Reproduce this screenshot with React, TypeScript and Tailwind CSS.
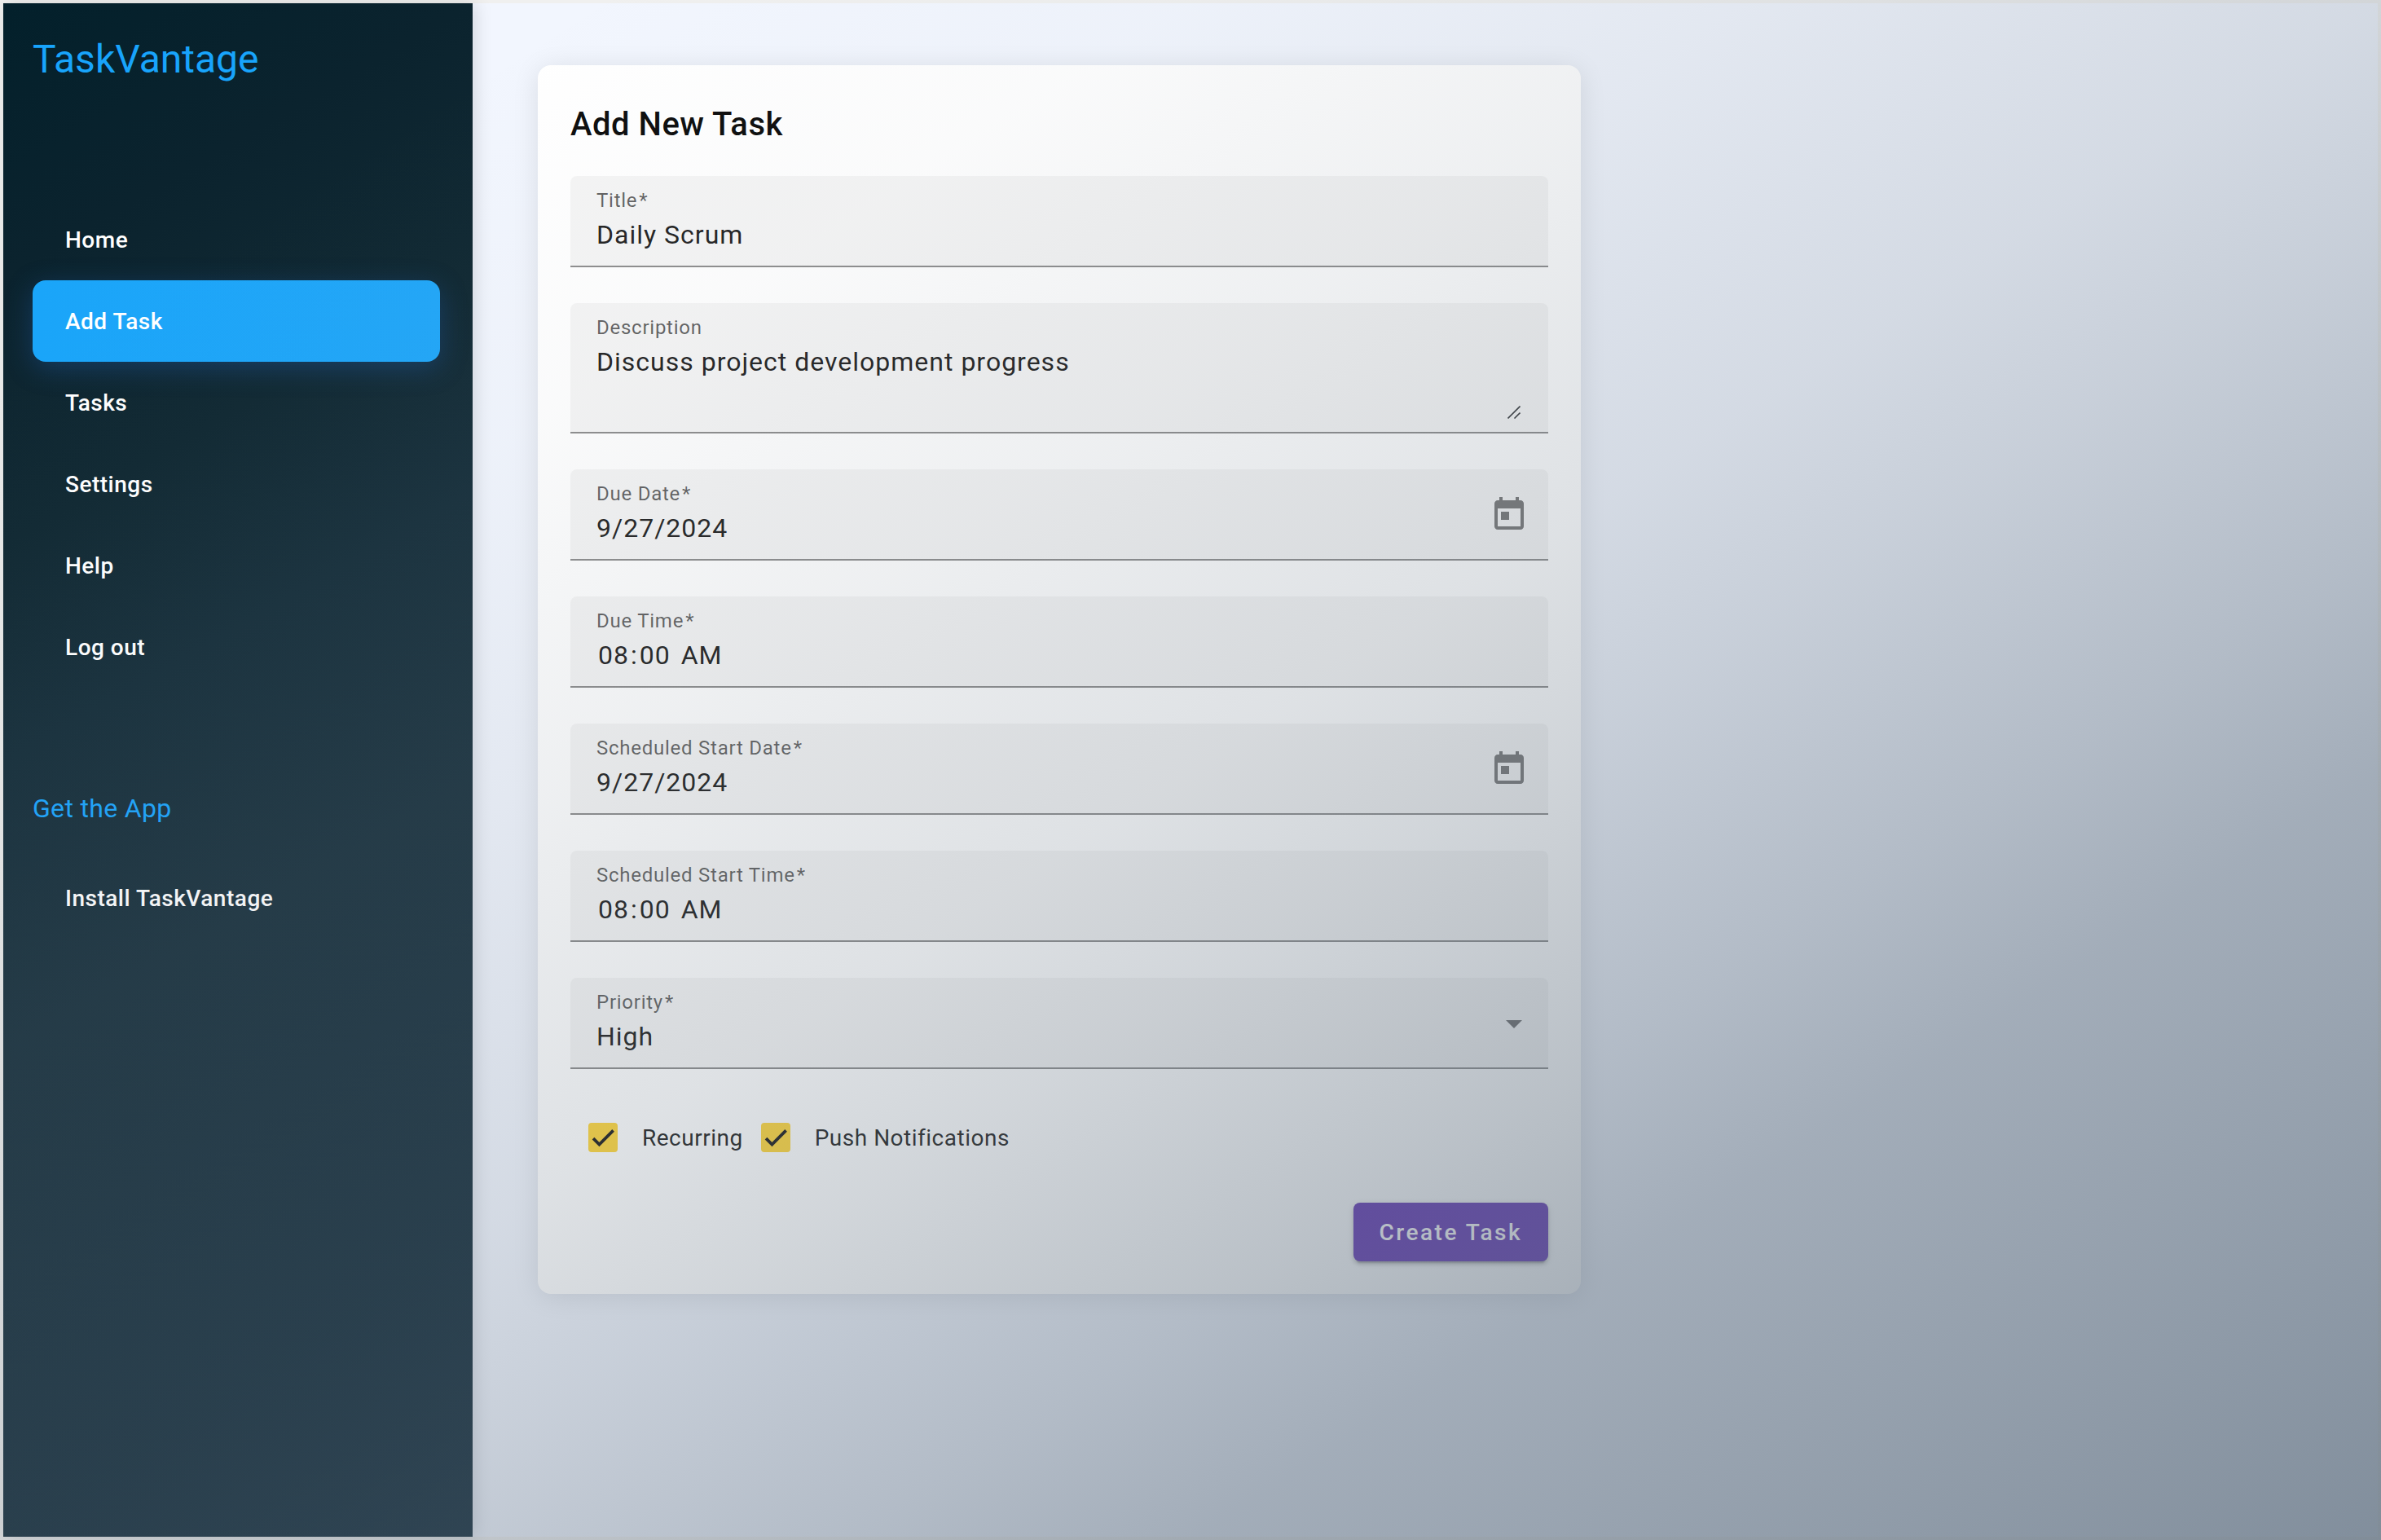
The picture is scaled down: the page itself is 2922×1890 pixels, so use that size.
import { useId, useState } from 'react';
import type { ReactNode } from 'react';

const NAV_ITEMS = ['Home', 'Add Task', 'Tasks', 'Settings', 'Help', 'Log out'];

const VALUE_CLASS =
  'block h-12 w-full appearance-none border-0 bg-transparent p-0 text-[32px] leading-[48px] tracking-[0.03125em] text-black/87 outline-none';

function NavLink({ label, active = false }: { label: string; active?: boolean }) {
  return (
    <a
      href="#"
      aria-current={active ? 'page' : undefined}
      className={
        active
          ? 'flex h-[100px] items-center rounded-2xl bg-[linear-gradient(to_right,#1aa5f9,#23a7f8)] px-10 pt-0.5 text-[28px] font-medium tracking-[0.018em] text-white shadow-[0_8px_32px_rgba(33,100,190,0.35)]'
          : 'flex h-[100px] items-center rounded-2xl px-10 pt-0.5 text-[28px] font-medium tracking-[0.018em] text-white'
      }
    >
      {label}
    </a>
  );
}

function Sidebar() {
  return (
    <aside className="relative z-10 flex w-[576px] shrink-0 flex-col bg-[linear-gradient(150deg,#03202b_0%,#0b232e_15%,#122a34_30%,#1a323e_42%,#203743_58%,#1c3341_100%)] pl-9 pr-10 pt-8 shadow-[4px_0_20px_rgba(0,0,0,0.12)]">
      <h1 className="text-5xl leading-[74px] text-[#18a4fc]">TaskVantage</h1>
      <nav aria-label="Main" className="mt-[134px] flex flex-col">
        {NAV_ITEMS.map((item) => (
          <NavLink key={item} label={item} active={item === 'Add Task'} />
        ))}
      </nav>
      <h2 className="mt-[124px] text-[32px] leading-[48px] tracking-[0.01em] text-[#20a6fc]">Get the App</h2>
      <nav aria-label="Get the App" className="mt-9">
        <NavLink label="Install TaskVantage" />
      </nav>
    </aside>
  );
}

function Field({
  label,
  required = true,
  trailing,
  children,
}: {
  label: string;
  required?: boolean;
  trailing?: ReactNode;
  children: (id: string) => ReactNode;
}) {
  const id = useId();
  return (
    <div className="relative flex items-center rounded-t-lg border-b-2 border-black/42 bg-black/4 pl-8 pr-6">
      <div className="min-w-0 flex-1 pb-3.5 pt-3">
        <label htmlFor={id} className="block text-2xl leading-9 tracking-[0.03125em] text-black/60">
          {label}
          {required && <span className="ml-0.5">*</span>}
        </label>
        {children(id)}
      </div>
      {trailing}
    </div>
  );
}

function DateField({ label }: { label: string }) {
  return (
    <Field
      label={label}
      trailing={
        <button type="button" aria-label={`Open calendar for ${label}`} className="mt-0.5 text-black/50">
          <svg viewBox="0 0 24 24" className="size-12" fill="currentColor" aria-hidden="true">
            <path d="M19 3h-1V1h-2v2H8V1H6v2H5c-1.11 0-1.99.9-1.99 2L3 19c0 1.1.89 2 2 2h14c1.1 0 2-.9 2-2V5c0-1.1-.9-2-2-2zm0 16H5V8h14v11zM7 10h5v5H7z" />
          </svg>
        </button>
      }
    >
      {(id) => <input id={id} type="text" defaultValue="9/27/2024" className={VALUE_CLASS} />}
    </Field>
  );
}

function TimeField({ label }: { label: string }) {
  return (
    <Field label={label}>
      {(id) => (
        <input
          id={id}
          type="time"
          defaultValue="08:00"
          className={`${VALUE_CLASS} [&::-webkit-calendar-picker-indicator]:hidden [&::-webkit-datetime-edit-hour-field]:px-0.5 [&::-webkit-datetime-edit-minute-field]:px-0.5 [&::-webkit-datetime-edit-ampm-field]:pl-1.5`}
        />
      )}
    </Field>
  );
}

function Checkbox({ label }: { label: string }) {
  const [checked, setChecked] = useState(true);
  return (
    <label className="flex h-20 items-center">
      <span className="grid size-20 place-items-center">
        <input
          type="checkbox"
          checked={checked}
          onChange={(e) => setChecked(e.target.checked)}
          className="col-start-1 row-start-1 size-9 appearance-none rounded border-4 border-black/54 checked:border-[#ffd740] checked:bg-[#ffd740]"
        />
        {checked && (
          <svg
            viewBox="0 0 24 24"
            className="pointer-events-none col-start-1 row-start-1 size-7"
            fill="none"
            stroke="#212121"
            strokeWidth="3.2"
            aria-hidden="true"
          >
            <path d="M1.73 12.91 8.1 19.28 22.79 4.59" />
          </svg>
        )}
      </span>
      <span className="pl-2 pt-0.5 text-[28px] tracking-[0.018em] text-black/87">{label}</span>
    </label>
  );
}

export default function App() {
  return (
    <div className="relative flex min-h-screen bg-[#f0f0ef] p-1 font-['Roboto',sans-serif]">
      <div className="flex flex-1 bg-[#f2f6fe]">
        <Sidebar />
        <main className="flex-1 px-20 py-[76px]">
          <form
            onSubmit={(e) => e.preventDefault()}
            className="flex max-w-[1280px] flex-col rounded-2xl bg-white p-10 shadow-[0_4px_32px_rgba(0,0,0,0.1)]"
          >
            <h2 className="text-[40px] font-medium leading-[66px] tracking-[0.0125em] text-black/95">
              Add New Task
            </h2>
            <div className="mt-[30px] flex flex-col gap-11">
              <Field label="Title">
                {(id) => <input id={id} type="text" defaultValue="Daily Scrum" className={VALUE_CLASS} />}
              </Field>
              <Field label="Description" required={false}>
                {(id) => (
                  <>
                    <textarea
                      id={id}
                      defaultValue="Discuss project development progress"
                      className={`${VALUE_CLASS} min-h-24 resize-none`}
                    />
                    <svg
                      viewBox="0 0 16 16"
                      className="pointer-events-none absolute bottom-4 right-[34px] size-4"
                      stroke="#3c3f42"
                      strokeWidth="1.6"
                      aria-hidden="true"
                    >
                      <path d="M0.5 15.5 15.5 0.5M8.5 15.5 15.5 8.5" />
                    </svg>
                  </>
                )}
              </Field>
              <DateField label="Due Date" />
              <TimeField label="Due Time" />
              <DateField label="Scheduled Start Date" />
              <TimeField label="Scheduled Start Time" />
              <Field
                label="Priority"
                trailing={
                  <svg
                    viewBox="0 0 20 10"
                    className="pointer-events-none mr-2 mt-1 h-2.5 w-5"
                    fill="currentColor"
                    fillOpacity="0.54"
                    aria-hidden="true"
                  >
                    <path d="M0 0h20L10 10z" />
                  </svg>
                }
              >
                {(id) => (
                  <select id={id} defaultValue="High" className={VALUE_CLASS}>
                    <option>High</option>
                    <option>Medium</option>
                    <option>Low</option>
                  </select>
                )}
              </Field>
            </div>
            <div className="mt-11 flex">
              <Checkbox label="Recurring" />
              <Checkbox label="Push Notifications" />
            </div>
            <button
              type="submit"
              className="mt-10 h-[72px] self-end rounded-lg bg-[#673ab7] px-8 pt-0.5 text-[28px] font-medium tracking-[0.089em] text-white shadow-[0_6px_2px_-4px_rgba(0,0,0,0.2),0_4px_4px_rgba(0,0,0,0.14),0_2px_10px_rgba(0,0,0,0.12)]"
            >
              Create Task
            </button>
          </form>
        </main>
      </div>
      {/* Dusk tint that deepens towards the bottom-right corner */}
      <div
        aria-hidden="true"
        className="pointer-events-none absolute inset-0 z-20 bg-[linear-gradient(to_bottom_right,rgba(90,106,122,0)_12%,rgba(90,106,122,0.03)_25%,rgba(90,106,122,0.1)_37%,rgba(90,106,122,0.2)_50%,rgba(90,106,122,0.28)_57%,rgba(90,106,122,0.42)_68%,rgba(90,106,122,0.52)_75%,rgba(90,106,122,0.74)_100%)]"
      />
    </div>
  );
}
